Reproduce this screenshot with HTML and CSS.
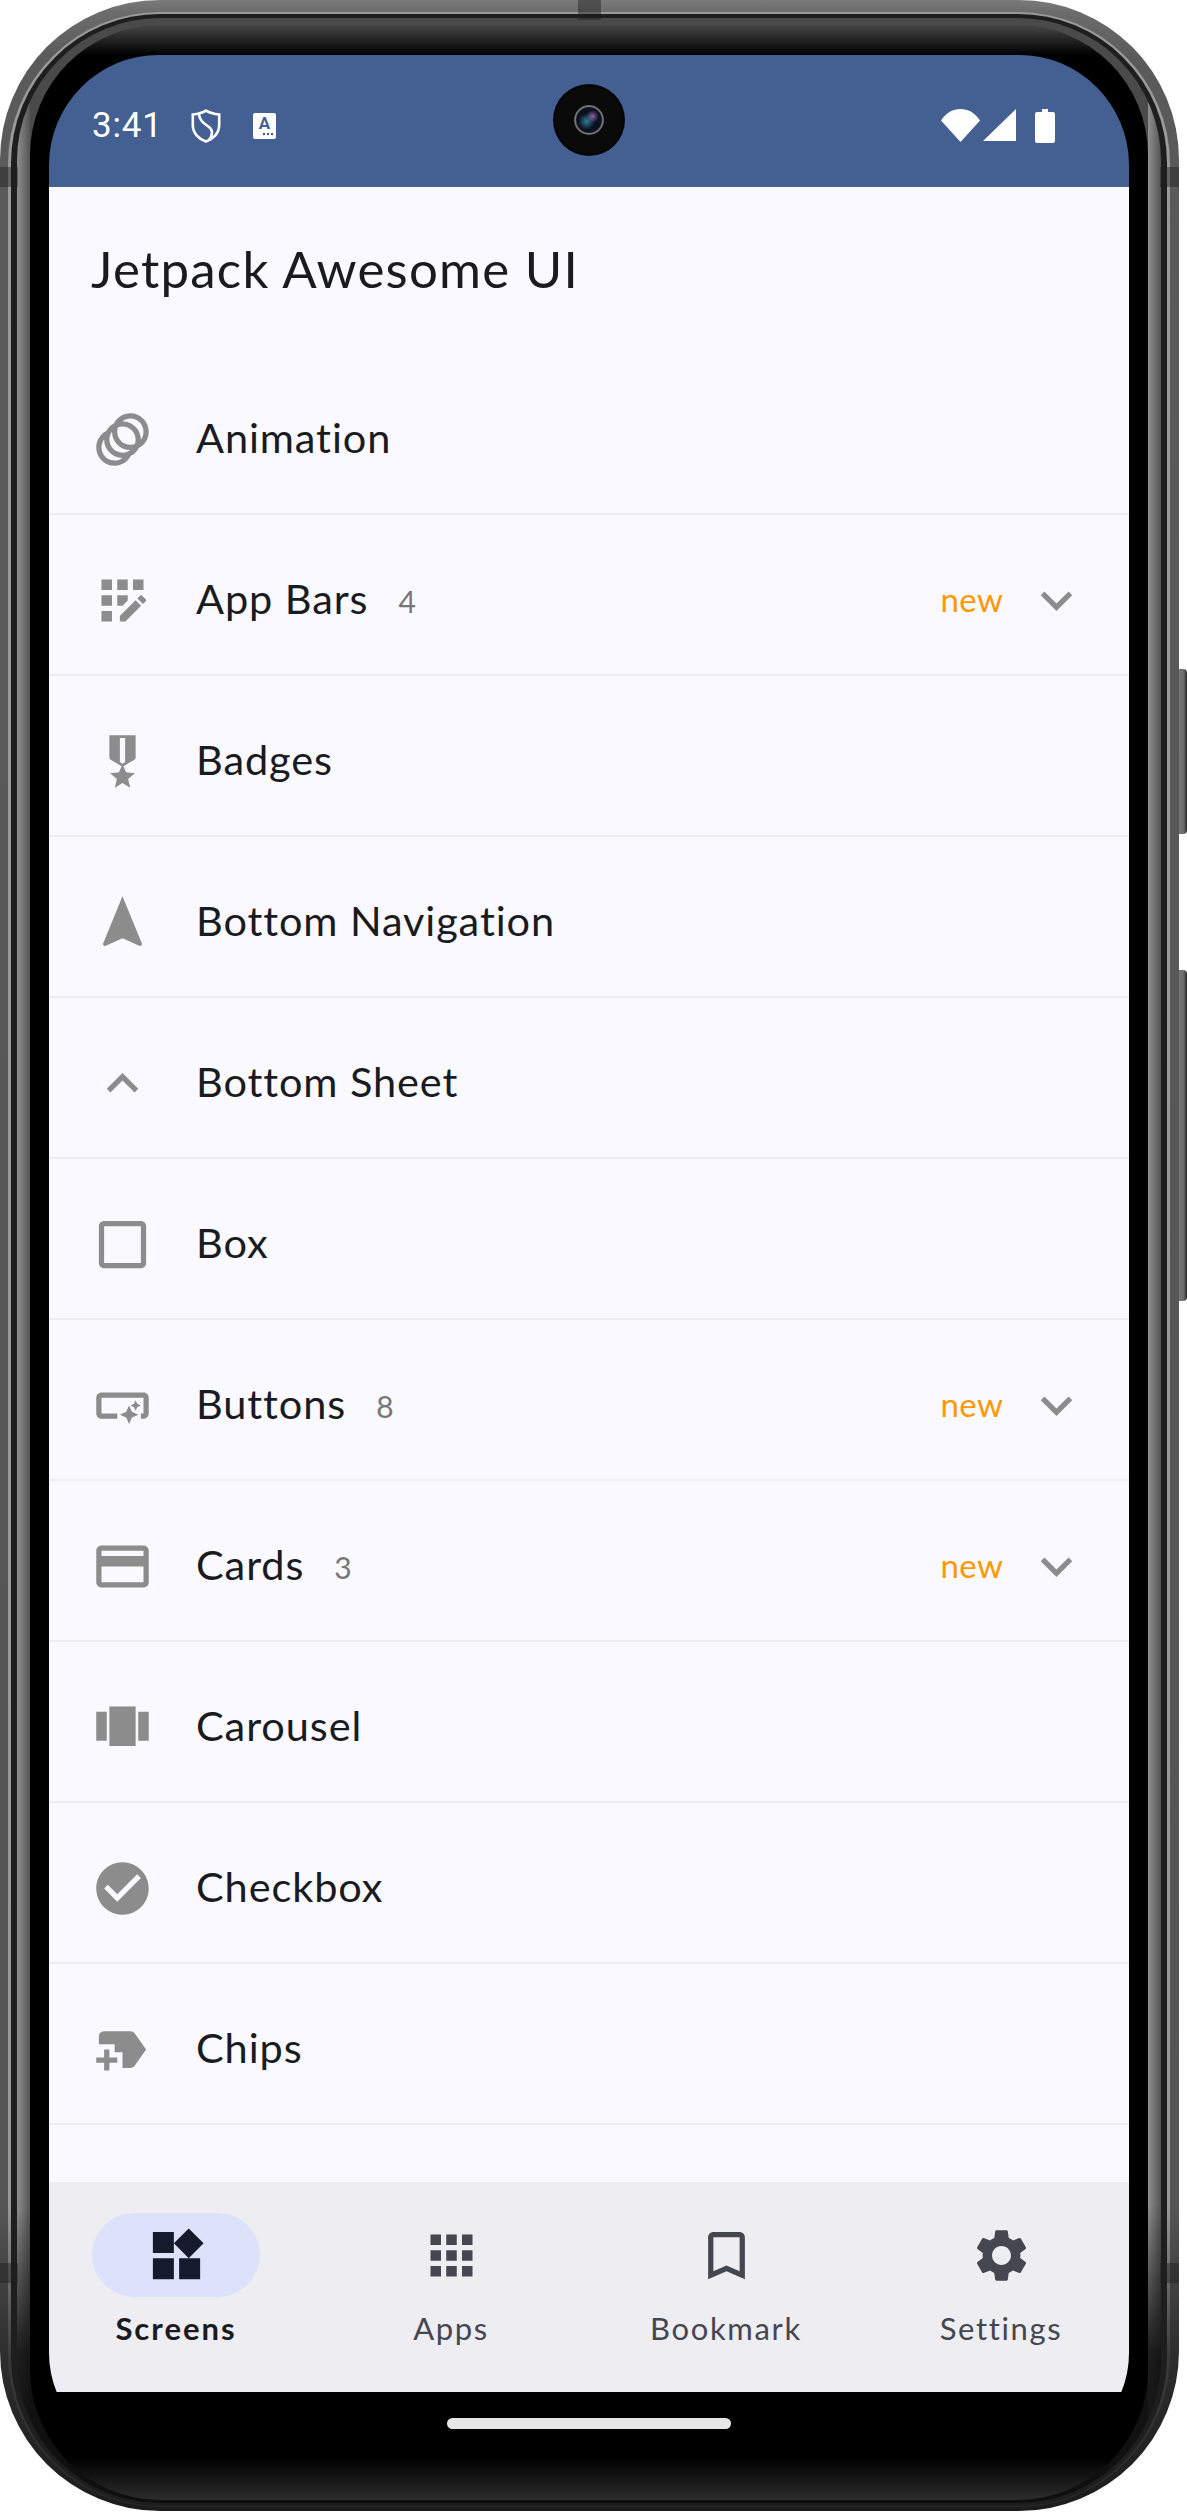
FILE: index.html
```html
<!DOCTYPE html>
<html lang="en">
<head>
<meta charset="utf-8">
<title>Jetpack Awesome UI</title>
<link rel="stylesheet" href="styles.css">
</head>
<body>
<div class="device">
  <span class="side-btn side-btn-power"></span>
  <span class="side-btn side-btn-volume"></span>
  <span class="band band-top"></span>
  <span class="band band-l1"></span>
  <span class="band band-l2"></span>
  <span class="band band-r1"></span>
  <span class="band band-r2"></span>
  <div class="rim">
  <div class="groove">
  <div class="chamfer">
  <div class="bezel">
    <div class="screen">
      <span class="camera"><span class="lens"></span></span>
      <header class="status">
        <div class="status-left">
          <span class="clock">3:41</span>
          <svg class="shield" viewBox="0 0 30 34"><path d="M15 1.600C19 4 24 5 28.200 5.500V16c0 8-5.800 14-13.200 16.600C7.600 30 1.800 24 1.800 16V5.500C6 5 11 4 15 1.600Z"/><path d="M8 4.500C8 12 14 15 18 18c4 3 4 8 0 13"/></svg>
          <span class="a-chip"><span class="a-letter">A</span><span class="a-dots"></span></span>
        </div>
        <div class="status-right">
          <svg class="wifi" viewBox="0 0 39 33"><path d="M19.500 33 0 11.500C5 3.700 12 0 19.500 0S34 3.700 39 11.500Z"/></svg>
          <svg class="signal" viewBox="0 0 33 32"><path d="M33 0v32H0Z"/></svg>
          <svg class="battery" viewBox="0 0 20 34"><path d="M7 0h6v3h5a2 2 0 0 1 2 2v27a2 2 0 0 1-2 2H2a2 2 0 0 1-2-2V5a2 2 0 0 1 2-2h5Z"/></svg>
        </div>
      </header>
      <main class="content">
        <h1 class="title">Jetpack Awesome UI</h1>
        <ul class="list">
          <li class="row">
            <svg class="ico" viewBox="0 0 24 24"><path d="M15 2c-2.710 0-5.050 1.540-6.220 3.780-1.280.67-2.340 1.720-3 3C3.540 9.950 2 12.290 2 15c0 3.870 3.130 7 7 7 2.710 0 5.050-1.540 6.220-3.780 1.280-.67 2.340-1.720 3-3C20.460 14.050 22 11.710 22 9c0-3.870-3.130-7-7-7zM9 20c-2.760 0-5-2.240-5-5 0-1.120.37-2.160 1-3 0 3.870 3.130 7 7 7-.84.63-1.880 1-3 1zm3-3c-2.760 0-5-2.240-5-5 0-1.120.37-2.160 1-3 0 3.860 3.130 6.990 7 7-.84.63-1.880 1-3 1zm4.700-3.300c-.53.19-1.100.3-1.700.3-2.760 0-5-2.240-5-5 0-.6.11-1.170.3-1.700.53-.19 1.100-.3 1.700-.3 2.760 0 5 2.240 5 5 0 .6-.11 1.170-.3 1.700zM19 12c0-3.860-3.130-6.990-7-7 .84-.63 1.870-1 3-1 2.760 0 5 2.240 5 5 0 1.120-.37 2.160-1 3z"/></svg>
            <span class="label">Animation</span>
          </li>
          <li class="row">
            <svg class="ico" viewBox="0 0 24 24"><path d="M10 4h4v4h-4zM4 16h4v4H4zM4 10h4v4H4zM4 4h4v4H4zM16 4h4v4h-4zM11 17.860V20h2.100l5.980-5.970-2.120-2.120zM14 12.030V10h-4v4h2.030zM20.850 11.560l-1.410-1.410c-.2-.2-.51-.2-.71 0l-1.060 1.060 2.120 2.120 1.060-1.060c.2-.2.2-.51 0-.71z"/></svg>
            <span class="label">App Bars</span><span class="count">4</span>
            <span class="new">new</span>
            <svg class="ico" viewBox="0 0 24 24"><path d="M16.590 8.590 12 13.170 7.410 8.590 6 10l6 6 6-6z"/></svg>
          </li>
          <li class="row">
            <svg class="ico" viewBox="0 0 24 24"><path d="M17 10.430V2H7v8.430c0 .35.18.68.49.86l4.180 2.510-.99 2.340-3.410.29 2.590 2.240L9.070 22 12 20.230 14.930 22l-.78-3.330 2.590-2.240-3.410-.29-.99-2.340 4.180-2.510c.3-.18.48-.5.48-.86zm-4 1.800-1 .6-1-.6V3h2v9.230z"/></svg>
            <span class="label">Badges</span>
          </li>
          <li class="row">
            <svg class="ico" viewBox="0 0 24 24"><path d="M12 2 4.500 20.290l.71.71L12 18l6.790 3 .71-.71z"/></svg>
            <span class="label">Bottom Navigation</span>
          </li>
          <li class="row">
            <svg class="ico" viewBox="0 0 24 24"><path d="m12 8-6 6 1.410 1.410L12 10.830l4.590 4.580L18 14z"/></svg>
            <span class="label">Bottom Sheet</span>
          </li>
          <li class="row">
            <svg class="ico" viewBox="0 0 24 24"><path d="M19 5v14H5V5h14m0-2H5c-1.100 0-2 .9-2 2v14c0 1.100.9 2 2 2h14c1.100 0 2-.9 2-2V5c0-1.100-.9-2-2-2z"/></svg>
            <span class="label">Box</span>
          </li>
          <li class="row">
            <svg class="ico" viewBox="0 0 24 24"><path d="M22 9v6c0 1.100-.9 2-2 2h-1v-2h1V9H4v6h6v2H4c-1.100 0-2-.9-2-2V9c0-1.100.9-2 2-2h16c1.100 0 2 .9 2 2zm-7.500 10 1.090-2.410L18 15.500l-2.410-1.090L14.500 12l-1.090 2.410L11 15.500l2.410 1.090L14.500 19zm2.500-5 .62-1.380L19 12l-1.380-.62L17 10l-.62 1.380L15 12l1.380.62L17 14z"/></svg>
            <span class="label">Buttons</span><span class="count">8</span>
            <span class="new">new</span>
            <svg class="ico" viewBox="0 0 24 24"><path d="M16.590 8.590 12 13.170 7.410 8.590 6 10l6 6 6-6z"/></svg>
          </li>
          <li class="row">
            <svg class="ico" viewBox="0 0 24 24"><path d="M20 4H4c-1.110 0-1.990.89-1.990 2L2 18c0 1.110.89 2 2 2h16c1.110 0 2-.89 2-2V6c0-1.110-.89-2-2-2zm0 14H4v-6h16v6zm0-10H4V6h16v2z"/></svg>
            <span class="label">Cards</span><span class="count">3</span>
            <span class="new">new</span>
            <svg class="ico" viewBox="0 0 24 24"><path d="M16.590 8.590 12 13.170 7.410 8.590 6 10l6 6 6-6z"/></svg>
          </li>
          <li class="row">
            <svg class="ico" viewBox="0 0 24 24"><path d="M7 19h10V4H7v15zm-5-2h4V6H2v11zm16-11v11h4V6h-4z"/></svg>
            <span class="label">Carousel</span>
          </li>
          <li class="row">
            <svg class="ico" viewBox="0 0 24 24"><path d="M12 2C6.480 2 2 6.480 2 12s4.480 10 10 10 10-4.480 10-10S17.520 2 12 2zm-2 15-5-5 1.410-1.410L10 14.170l7.590-7.590L19 8l-9 9z"/></svg>
            <span class="label">Checkbox</span>
          </li>
          <li class="row">
            <svg class="ico" viewBox="0 0 24 24"><path d="m21 12-4.370 6.160C16.260 18.680 15.650 19 15 19h-3v-6H9v-3H3V7c0-1.100.9-2 2-2h10c.65 0 1.260.31 1.630.84L21 12zM10 15H7v-3H5v3H2v2h3v3h2v-3h3v-2z"/></svg>
            <span class="label">Chips</span>
          </li>
        </ul>
      </main>
      <nav class="nav">
        <div class="nav-item nav-item-active">
          <span class="pill"><svg class="nav-ico" viewBox="0 0 24 24"><path d="M13 13v8h8v-8h-8zM3 21h8v-8H3v8zM3 3v8h8V3H3zm13.660-1.310L11 7.340 16.660 13l5.660-5.660-5.660-5.650z"/></svg></span>
          <span class="nav-label">Screens</span>
        </div>
        <div class="nav-item">
          <span class="pill"><svg class="nav-ico" viewBox="0 0 24 24"><path d="M4 8h4V4H4v4zm6 12h4v-4h-4v4zm-6 0h4v-4H4v4zm0-6h4v-4H4v4zm6 0h4v-4h-4v4zm6-10v4h4V4h-4zm-6 4h4V4h-4v4zm6 6h4v-4h-4v4zm0 6h4v-4h-4v4z"/></svg></span>
          <span class="nav-label">Apps</span>
        </div>
        <div class="nav-item">
          <span class="pill"><svg class="nav-ico" viewBox="0 0 24 24"><path d="M17 3H7c-1.100 0-2 .9-2 2v16l7-3 7 3V5c0-1.100-.9-2-2-2zm0 15-5-2.180L7 18V5h10v13z"/></svg></span>
          <span class="nav-label">Bookmark</span>
        </div>
        <div class="nav-item">
          <span class="pill"><svg class="nav-ico" viewBox="0 0 24 24"><path d="M19.140 12.940c.04-.3.06-.61.06-.94 0-.32-.02-.64-.07-.94l2.030-1.580c.18-.14.23-.41.12-.61l-1.920-3.320c-.12-.22-.37-.29-.59-.22l-2.390.96c-.5-.38-1.030-.7-1.620-.94L14.400 2.810c-.04-.24-.24-.41-.48-.41h-3.840c-.24 0-.43.17-.47.41L9.250 5.350c-.59.24-1.130.57-1.620.94l-2.390-.96c-.22-.08-.47 0-.59.22L2.740 8.870c-.12.21-.08.47.12.61l2.030 1.580c-.05.3-.09.63-.09.94s.02.64.07.94l-2.030 1.580c-.18.14-.23.41-.12.61l1.920 3.320c.12.22.37.29.59.22l2.390-.96c.5.38 1.030.7 1.620.94l.36 2.540c.05.24.24.41.48.41h3.840c.24 0 .44-.17.47-.41l.36-2.540c.59-.24 1.130-.56 1.620-.94l2.390.96c.22.08.47 0 .59-.22l1.920-3.320c.12-.22.07-.47-.12-.61l-2.010-1.580zM12 15.600c-1.980 0-3.600-1.620-3.600-3.600s1.620-3.600 3.600-3.600 3.600 1.620 3.600 3.600-1.620 3.600-3.600 3.600z"/></svg></span>
          <span class="nav-label">Settings</span>
        </div>
      </nav>
      <footer class="gesture"><span class="home-bar"></span></footer>
    </div>
  </div>
  </div>
  </div>
  </div>
</div>
</body>
</html>
```

FILE: styles.css
```css
* { box-sizing: border-box; }

html, body { margin: 0; padding: 0; background: #fff; }

body { width: 1187px; height: 2513px; overflow: hidden; font-family: "Lato", "Noto Sans", sans-serif; }

.device {
  position: relative;
  width: 1179px;
  height: 2511px;
  padding: 12px 9px 4px 8px;
  border-radius: 160px;
  background: linear-gradient(to bottom, #7a7a7a 0, #6c6c6c 12px, #5a5a5a 60px, #555 88%, #2c2c2c 94%, #1c1c1c 100%);
}

.rim {
  height: 100%;
  padding: 2px 3px 1px 3px;
  border-radius: 152px;
  background: linear-gradient(to bottom, #9a9a9a 0, #989898 88%, #3a3a3a 94%, #2a2a2a 100%);
}

.groove {
  height: 100%;
  padding: 4px 6px 3px 6px;
  border-radius: 149px;
  background: #1e1e1e;
}

.chamfer {
  height: 100%;
  padding: 7px 13px 3px 13px;
  border-radius: 143px;
  background:
    linear-gradient(to bottom, rgba(0, 0, 0, 0) 88%, rgba(10, 10, 10, .85) 94%, #0e0e0e 100%),
    linear-gradient(to right, #8f8f8f 0, #555 13px, rgba(0, 0, 0, 0) 13px, rgba(0, 0, 0, 0) calc(100% - 13px), #8f8f8f calc(100% - 13px), #555 100%),
    #4a4a4a;
}

.side-btn {
  position: absolute;
  left: 1179px;
  width: 8px;
  border-radius: 0 4px 4px 0;
  background: linear-gradient(to right, #777, #6a6a6a 60%, #4a4a4a 80%, #222);
}

.side-btn-power { top: 669px; height: 165px; }
.side-btn-volume { top: 970px; height: 331px; }

.band { position: absolute; background: rgba(30, 30, 30, .45); }
.band-top { left: 578px; top: 0; width: 23px; height: 20px; }
.band-l1 { left: 0; top: 167px; width: 18px; height: 20px; }
.band-l2 { left: 0; top: 2263px; width: 18px; height: 20px; }
.band-r1 { left: 1160px; top: 167px; width: 19px; height: 20px; }
.band-r2 { left: 1160px; top: 2263px; width: 19px; height: 20px; }

.bezel {
  width: 1118px;
  height: 2475px;
  padding: 30px 19px 43px 19px;
  border-radius: 130px;
  background: linear-gradient(to bottom, #464646 0, #000 30px, #000 calc(100% - 43px), #2c2c2c 100%);
}

.screen {
  position: relative;
  display: flex;
  flex-direction: column;
  width: 1080px;
  height: 2402px;
  overflow: hidden;
  border-radius: 110px 110px 104px 104px;
  background: #000;
}

.camera {
  position: absolute;
  left: 504px;
  top: 29px;
  display: flex;
  align-items: center;
  justify-content: center;
  width: 72px;
  height: 72px;
  border-radius: 50%;
  background: radial-gradient(circle, #0a0a0a 0, #0a0a0a 65%, #050505 66%, #000 100%);
}

.lens {
  width: 30px;
  height: 30px;
  border-radius: 50%;
  background:
    radial-gradient(circle at 62% 38%, #8a65a8 0, rgba(138, 101, 168, 0) 24%),
    radial-gradient(circle at 42% 55%, #2f7f92 0, rgba(47, 127, 146, 0) 34%),
    radial-gradient(circle at 50% 50%, #0c1020 0, #0c1020 58%, #777 64%, #3a3a3a 80%, #141414 100%);
}

.status {
  display: flex;
  flex: none;
  align-items: center;
  justify-content: space-between;
  height: 132px;
  padding: 10px 74px 0 43px;
  background: #445f91;
}

.status-left { display: flex; align-items: center; }
.status-right { display: flex; align-items: flex-start; }

.clock { width: 99px; color: #fff; font: 400 35px/40px "Roboto", sans-serif; letter-spacing: .8px; }

.shield { width: 30px; height: 34px; fill: none; stroke: #fff; stroke-width: 2.6; }

.a-chip {
  display: flex;
  flex-direction: column;
  align-items: center;
  width: 23px;
  height: 26px;
  margin-left: 32px;
  border-radius: 2px;
  background: #fff;
}

.a-letter { height: 19px; color: #445f91; font: 700 17px/21px "Roboto", sans-serif; }

.a-dots {
  align-self: flex-end;
  width: 12px;
  height: 4px;
  margin-right: 2px;
  background: radial-gradient(circle, #445f91 0, #445f91 1.400px, transparent 1.600px) 0 0 / 4px 4px repeat-x;
}

.wifi { width: 39px; height: 33px; fill: #fff; }
.signal { width: 33px; height: 32px; margin-left: 3px; fill: #fff; }
.battery { width: 20px; height: 34px; margin-left: 19px; fill: #fff; }

.content { flex: 1; min-height: 0; overflow: hidden; background: #f9f9ff; }

.title {
  height: 167px;
  margin: 0;
  padding: 51px 0 0 42px;
  color: #1a1b20;
  font-size: 51px;
  font-weight: 400;
  line-height: 62px;
  letter-spacing: 1.250px;
}

.list { margin: 0; padding: 0; list-style: none; }

.row {
  display: flex;
  align-items: center;
  height: 161px;
  padding: 12px 41.500px 0 41.500px;
  border-bottom: 2.600px solid #eeedf2;
}

.ico { flex: none; width: 63px; height: 63px; fill: #8c8c8c; }

.label {
  margin-left: 42.500px;
  margin-bottom: 5px;
  color: #1a1b20;
  font-size: 41.500px;
  line-height: 52px;
  letter-spacing: .9px;
}

.count { margin-left: 30px; color: #777; font-size: 30px; line-height: 52px; }

.new { margin-left: auto; margin-right: 21px; margin-bottom: 4px; color: #ff9800; font-size: 33px; line-height: 52px; letter-spacing: .5px; }

.nav {
  display: grid;
  flex: none;
  grid-template-columns: repeat(4, 254px);
  gap: 21px;
  height: 210px;
  padding-top: 31px;
  background: #eeedf2;
}

.nav-item { display: flex; flex-direction: column; align-items: center; }

.pill {
  display: flex;
  align-items: center;
  justify-content: center;
  width: 168px;
  height: 84px;
  border-radius: 42px;
}

.nav-item-active .pill { background: #dce2f9; }

.nav-ico { width: 63px; height: 63px; fill: #44474f; }

.nav-item-active .nav-ico { fill: #141b2c; }

.nav-label {
  margin-top: 11px;
  color: #44474f;
  font-size: 31px;
  line-height: 40px;
  letter-spacing: 1.650px;
}

.nav-item-active .nav-label { color: #1a1b20; font-weight: 700; letter-spacing: 2px; }

.gesture {
  display: flex;
  flex: none;
  justify-content: center;
  height: 65px;
  padding-top: 26px;
  background: #000;
}

.home-bar { width: 284px; height: 11px; border-radius: 6px; background: #e6e6e6; }
```
